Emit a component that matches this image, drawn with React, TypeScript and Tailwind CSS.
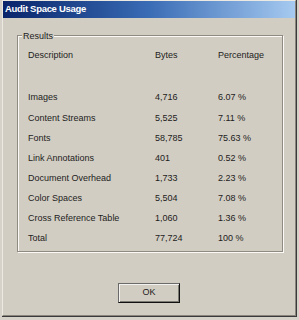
const rows = [
  { name: "Images", bytes: "4,716", pct: "6.07 %" },
  { name: "Content Streams", bytes: "5,525", pct: "7.11 %" },
  { name: "Fonts", bytes: "58,785", pct: "75.63 %" },
  { name: "Link Annotations", bytes: "401", pct: "0.52 %" },
  { name: "Document Overhead", bytes: "1,733", pct: "2.23 %" },
  { name: "Color Spaces", bytes: "5,504", pct: "7.08 %" },
  { name: "Cross Reference Table", bytes: "1,060", pct: "1.36 %" },
  { name: "Total", bytes: "77,724", pct: "100 %" },
];

const Row = ({ a, b, c }: { a: string; b: string; c: string }) => (
  <div className="flex h-[20.15px] items-center">
    <span className="w-[127px]">{a}</span>
    <span className="w-[63px]">{b}</span>
    <span>{c}</span>
  </div>
);

export default function App() {
  return (
    <div className="h-[320px] w-[299px] overflow-hidden bg-[#d6d2c9] font-['Liberation_Sans',Arial,sans-serif] text-[9px] text-[#1c1c1c]">
      <div className="ml-[2px] h-[317px] w-[295px] border-r border-b border-[#3a3a3a] bg-[#d2cdc2]">
        <div className="flex h-full flex-col border border-[#8a867e] border-l-[#ece9e2] border-t-[#ece9e2]">
          {/* title bar */}
          <div className="flex h-[17px] items-center bg-gradient-to-r from-[#0a246a] via-[#3a6cb5] to-[#a6caf0] pl-[2px] text-[9.5px] font-bold tracking-[-0.3px] text-white">
            Audit Space Usage
          </div>

          {/* Results group */}
          <div className="relative mt-[17px] ml-[14px] h-[217px] w-[266px] border border-[#8f8b83] shadow-[inset_1px_1px_0_#fbfaf7,1px_1px_0_#fbfaf7]">
            <span className="absolute top-[-6px] left-[4px] bg-[#d2cdc2] px-[1px] leading-[12px]">
              Results
            </span>
            <div className="mt-[10px] pl-[10px]">
              <Row a="Description" b="Bytes" c="Percentage" />
              <div className="h-[22px]" />
              {rows.map((r) => (
                <Row key={r.name} a={r.name} b={r.bytes} c={r.pct} />
              ))}
            </div>
          </div>

          <button className="mx-auto mt-[31px] flex h-[20px] w-[62px] items-center justify-center border border-[#6a6a6a] border-r-[#111] border-b-[#111] bg-[#d2cdc2] text-[9px] text-[#1c1c1c] shadow-[inset_1px_1px_0_#f4f2ee,inset_-1px_-1px_0_#7d7a73]">
            OK
          </button>
        </div>
      </div>
    </div>
  );
}
